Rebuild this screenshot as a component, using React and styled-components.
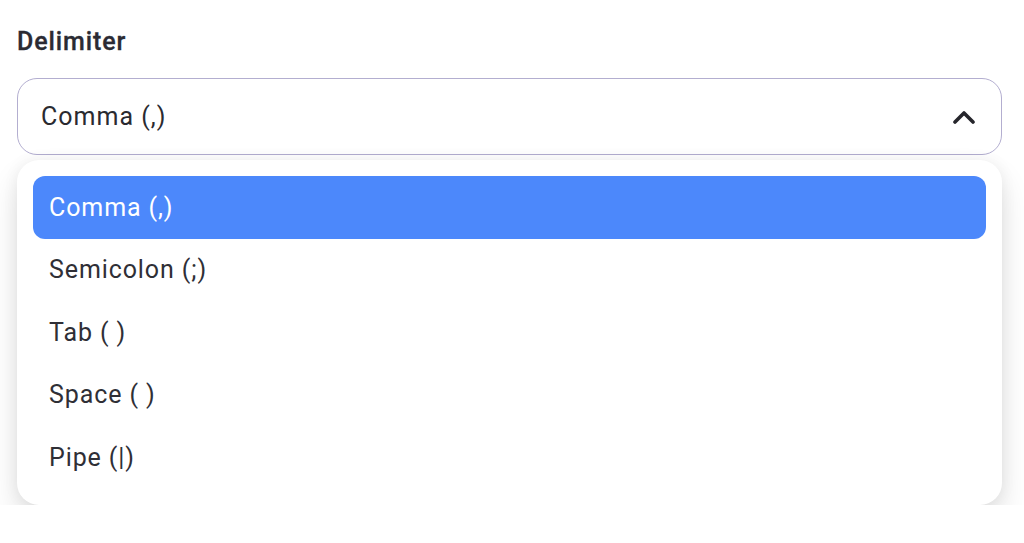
import React, { useState } from 'react';
import styled, { createGlobalStyle, css } from 'styled-components';

const GlobalStyle = createGlobalStyle`
  body {
    margin: 0;
    background: #ffffff;
    font-family: Roboto, "Liberation Sans", sans-serif;
  }
`;

const Field = styled.div`
  display: flex;
  flex-direction: column;
  padding: 24px 22px 0 17px;
`;

const Label = styled.label`
  color: #2b2b33;
  font-size: 25px;
  font-weight: 500;
  letter-spacing: 0.9px;
  line-height: 36px;
  margin-bottom: 18px;
  -webkit-text-stroke: 0.3px #2b2b33;
`;

const Trigger = styled.button`
  display: flex;
  align-items: center;
  justify-content: space-between;
  height: 77px;
  padding: 0 26px 0 23px;
  border: 1px solid #b3aed0;
  border-radius: 20px;
  background: #fff;
  color: #2a2a30;
  font-family: inherit;
  font-size: 25px;
  letter-spacing: 1px;
  text-align: left;
  cursor: pointer;
`;

const Menu = styled.ul`
  list-style: none;
  margin: 5px 0 0 0;
  padding: 16px;
  border-radius: 22px;
  background: #fff;
  box-shadow: 0 16px 30px rgba(0, 0, 0, 0.12), 0 0 16px rgba(0, 0, 0, 0.06);
`;

const Option = styled.li`
  display: flex;
  align-items: center;
  height: 62.5px;
  padding: 0 16px;
  border-radius: 12px;
  color: #2f2f36;
  font-size: 25px;
  letter-spacing: 0.9px;
  cursor: pointer;
  ${(props) => props.selected && css`
    background: #4c88fb;
    color: #fff;
  `}
`;

const OPTIONS = ['Comma (,)', 'Semicolon (;)', 'Tab ( )', 'Space ( )', 'Pipe (|)'];

function ChevronUp() {
  return (
    <svg width="22" height="14" viewBox="0 0 22 14" fill="none">
      <path d="M2 12 L11 3 L20 12" stroke="#26262c" strokeWidth="3.6" strokeLinecap="round" strokeLinejoin="round" />
    </svg>
  );
}

export default function App() {
  const [value, setValue] = useState(OPTIONS[0]);
  return (
    <>
      <GlobalStyle />
      <Field>
        <Label>Delimiter</Label>
        <Trigger type="button">
          {value}
          <ChevronUp />
        </Trigger>
        <Menu>
          {OPTIONS.map((opt) => (
            <Option key={opt} selected={opt === value} onClick={() => setValue(opt)}>
              {opt}
            </Option>
          ))}
        </Menu>
      </Field>
    </>
  );
}
